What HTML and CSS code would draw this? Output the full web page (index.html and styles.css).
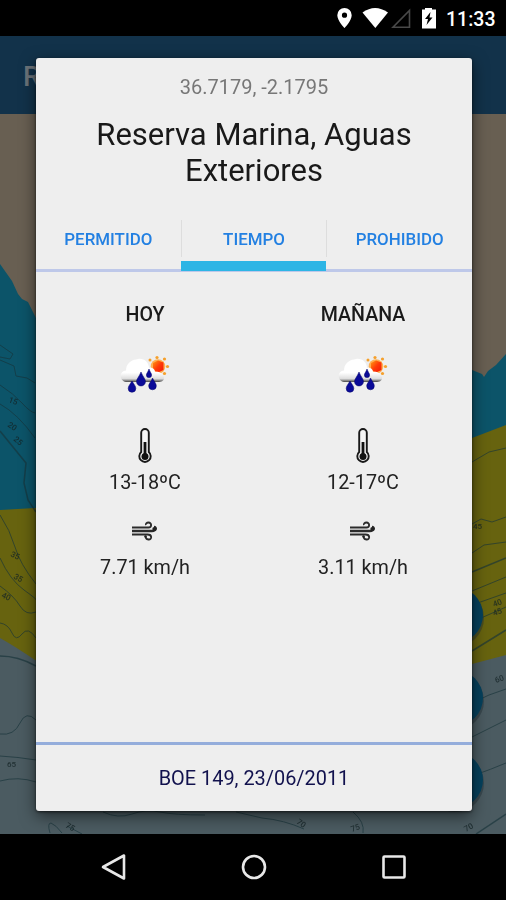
FILE: index.html
```html
<!DOCTYPE html>
<html lang="es">
<head>
<meta charset="utf-8">
<title>Reserva Marina</title>
<link rel="stylesheet" href="styles.css">
</head>
<body>
<svg width="0" height="0" class="defs" aria-hidden="true">
  <defs>
    <linearGradient id="cloud" x1="0" y1="0" x2="0" y2="1">
      <stop offset="0.6" stop-color="#fff"/><stop offset="0.86" stop-color="#ddd"/><stop offset="1" stop-color="#444"/>
    </linearGradient>
    <linearGradient id="sun" x1="0" y1="0" x2="1" y2="1">
      <stop offset="0" stop-color="#ff9a10"/><stop offset="0.5" stop-color="#ff3a08"/><stop offset="1" stop-color="#f01808"/>
    </linearGradient>
    <symbol id="rain" viewBox="0 0 50 40">
      <g fill="#f5a02c"><circle cx="30" cy="5" r="1.500"/><circle cx="37" cy="2.500" r="1.600"/><circle cx="44.500" cy="4" r="1.600"/><circle cx="47.500" cy="11.500" r="1.600"/><circle cx="44.500" cy="18.500" r="1.600"/></g>
      <circle cx="38" cy="11.500" r="7.300" fill="#ffb052"/>
      <path d="M33 8L38 5.500L43.500 7.500V15L38 17.500L33 15Z" fill="url(#sun)"/>
      <path d="M6 27C-1 26-1 16 6 15.500C6 9 11 5 16 4.500C23 2 29 7 29 13C33 12 35 15 35 17C39 16 44 19 44 23C44 26 41 27 38 27Z" fill="url(#cloud)"/>
      <g fill="#0a0a98" stroke="#05056b" stroke-width=".5">
        <path d="M12 26C14 29.500 15.800 31 15.800 33.500A3.800 3.800 0 0 1 8.200 33.500C8.200 31 10 29.500 12 26Z"/>
        <path d="M21 17C23 22 25.500 24 25.500 26.500A4.500 4.500 0 0 1 16.500 26.500C16.500 24 19 22 21 17Z"/>
        <path d="M29 14C30 17 31.600 18.500 31.600 20A2.600 2.600 0 0 1 26.400 20C26.400 18.500 28 17 29 14Z"/>
        <path d="M32.500 23C34.500 27 36.300 28.500 36.300 31A3.800 3.800 0 0 1 28.700 31C28.700 28.500 31 27 32.500 23Z"/>
      </g>
    </symbol>
    <symbol id="thermo" viewBox="0 0 16 36">
      <path d="M4.200 24V4.800a3.800 3.800 0 0 1 7.600 0V24a5.700 5.700 0 1 1-7.600 0Z" fill="#f5f5f5" stroke="#181818" stroke-width="1.900"/>
      <path d="M8 14V27" stroke="#111" stroke-width="2.800"/><circle cx="8" cy="28.500" r="3.500" fill="#111"/>
    </symbol>
    <symbol id="wind" viewBox="0 0 26 20">
      <g fill="none" stroke="#2b2b2b" stroke-width="1.800">
        <path d="M0 6.500H16.500C20 6.500 20 1.500 16.500 1.500C14.500 1.500 13.500 3 14 4"/>
        <path d="M0 10H20C24.500 10 25 6 22 6" stroke-width="2.300"/>
        <path d="M0 13.500H15.500C20.500 13.500 20 18.800 16.500 18.500C14 18 13.500 17 14 15.500"/>
      </g><circle cx="22.300" cy="8" r="2" fill="#222"/><circle cx="13.500" cy="15.500" r="1.300" fill="#222"/>
    </symbol>
  </defs>
</svg>
<div class="screen">
  <header class="status">
    <svg class="status-icons" width="104" height="24" viewBox="334 6 104 24">
      <path d="M344.500 8a7.200 7.200 0 0 0-7.200 7.200C337.300 20.500 344.500 28 344.500 28s7.200-7.500 7.200-12.800A7.200 7.200 0 0 0 344.500 8Zm0 4.600a2.600 2.600 0 1 1 0 5.200a2.600 2.600 0 0 1 0-5.200Z" fill="#fff"/>
      <path d="M362.500 12.500Q375 3.500 388 12.500L375.300 28Z" fill="#fff"/>
      <path d="M409.500 10.500V27.300H393Z" fill="none" stroke="#494949" stroke-width="1.600"/>
      <path d="M422 9.500h3V8h7v1.500h4V28.500h-14Z" fill="#fff"/>
      <path d="M430.500 12l-5.500 7h3l-1.500 6l6-7.500h-3Z" fill="#000"/>
    </svg>
    <time class="clock">11:33</time>
  </header>
  <div class="appbar">R</div>
  <svg class="map" width="506" height="720" viewBox="0 114 506 720">
    <rect y="114" width="506" height="720" fill="#685f52"/>
    <path d="M0 264L12 281L18 294L22 299L28 302L35 316L60 370H472L482 374L484 377L488 371L496 365L506 354V520H0Z" fill="#0c5469"/>
    <path d="M0 510L35 508L100 500L472 438L506 425V700H0Z" fill="#67630f"/>
    <path d="M0 638Q16 647 35 660L140 690H420L472 664L506 655V834H0Z" fill="#4b5b61"/>
    <g fill="none" stroke="#18343a" stroke-width="1" opacity=".65">
      <path d="M0 345L13 354L10 359L0 357M0 360L14 366L16 376L27 378L35 383M0 385Q14 394 22 403T35 413M0 404Q18 414 35 438"/>
      <path d="M0 431L26 463L24 483L28 500L36 512" stroke-width="1.500"/>
      <path d="M0 515Q10 530 15 547T36 584M0 558Q10 580 24 590T36 600M0 586Q14 596 20 606T36 612M0 623Q8 624 12 633T22 634T36 638"/>
      <path d="M0 656Q18 656 36 666" stroke-width="1.500"/>
      <path d="M0 734Q14 736 20 723T36 720M0 756Q18 757 36 760M0 781Q18 776 36 782"/>
      <path d="M472 462L489 452L506 448M472 524L481 519L492 522L506 517M472 553L484 545L506 542"/>
      <path d="M472 572L506 558M472 651L506 630" stroke-width="1.500"/>
      <path d="M472 591L506 577M472 605L506 593M472 622L506 607M472 703Q489 694 506 689M472 737L506 720M472 776Q492 769 506 763"/>
      <path d="M50 833Q47 823 51 823Q56 825 62 833M67 826L82 834M103 812Q118 819 132 814T160 812T205 815M236 812L262 818Q284 820 304 829M353 812Q365 822 363 833"/>
      <path d="M476 834L506 814" stroke-width="1.500"/>
    </g>
    <g class="depth">
      <text transform="translate(8 402) rotate(20)">15</text>
      <text transform="translate(7 426) rotate(35)">20</text>
      <text transform="translate(13 440) rotate(40)">25</text>
      <text transform="translate(10 556) rotate(25)">35</text>
      <text transform="translate(13 578) rotate(30)">35</text>
      <text transform="translate(1 597) rotate(25)">40</text>
      <text transform="translate(7 767)">65</text>
      <text transform="translate(473 529)">45</text>
      <text transform="translate(494 607) rotate(-20)">40</text>
      <text transform="translate(494 616) rotate(-20)">45</text>
      <text transform="translate(496 683) rotate(-20)">60</text>
      <text transform="translate(65 827) rotate(30)">75</text>
      <text transform="translate(296 823) rotate(35)">70</text>
      <text transform="translate(352 832) rotate(-20)">75</text>
      <text transform="translate(466 832) rotate(-30)">70</text>
    </g>
    <g fill="#243238" opacity=".45"><circle cx="455" cy="618" r="29"/><circle cx="455" cy="701" r="29"/><circle cx="455" cy="783" r="29"/></g>
    <g fill="#05415d"><circle cx="455" cy="615" r="28"/><circle cx="455" cy="698" r="28"/><circle cx="455" cy="780" r="28"/></g>
  </svg>
  <nav class="navbar">
    <svg width="32" height="32" viewBox="0 0 32 32"><path d="M5 16L26 4.500V27.500Z"/></svg>
    <svg width="32" height="32" viewBox="0 0 32 32"><circle cx="16" cy="16" r="11"/></svg>
    <svg width="32" height="32" viewBox="0 0 32 32"><rect x="5.500" y="5.500" width="21" height="21" rx="1"/></svg>
  </nav>
  <section class="dialog">
    <p class="coords">36.7179, -2.1795</p>
    <h1 class="title">Reserva Marina, Aguas<br>Exteriores</h1>
    <div class="tabs">
      <div class="tab"><span>PERMITIDO</span></div>
      <div class="tab active"><span>TIEMPO</span></div>
      <div class="tab"><span>PROHIBIDO</span></div>
    </div>
    <div class="forecast">
      <div class="day">
        <h2>HOY</h2>
        <svg class="rain"><use href="#rain"/></svg>
        <svg class="thermo"><use href="#thermo"/></svg>
        <p class="temp">13-18ºC</p>
        <svg class="wind"><use href="#wind"/></svg>
        <p class="speed">7.71 km/h</p>
      </div>
      <div class="day">
        <h2>MAÑANA</h2>
        <svg class="rain"><use href="#rain"/></svg>
        <svg class="thermo"><use href="#thermo"/></svg>
        <p class="temp">12-17ºC</p>
        <svg class="wind"><use href="#wind"/></svg>
        <p class="speed">3.11 km/h</p>
      </div>
    </div>
    <footer class="source">BOE 149, 23/06/2011</footer>
  </section>
</div>
</body>
</html>
```
FILE: styles.css
```css
* { box-sizing: border-box; margin: 0; }
body { font-family: Roboto, "Liberation Sans", sans-serif; background: #000; }
svg { display: block; }
.defs { position: absolute; }
.screen { position: relative; width: 506px; height: 900px; display: flex; flex-direction: column; overflow: hidden; }

.status { height: 36px; flex: none; padding-right: 10px; display: flex; align-items: center; justify-content: flex-end; gap: 8px; background: #000; }
.clock { width: 50px; color: #fff; font-size: 19.5px; font-weight: 500; line-height: 36px; white-space: nowrap; padding-top: 3px; }
.appbar { height: 78px; padding: 2px 23px 0; background: #12324a; color: #6c747a; font-size: 28px; font-weight: 500; line-height: 78px; }
.map { flex: none; }
.depth { font-size: 8px; font-weight: 500; fill: #152426; opacity: .8; }

.navbar { height: 66px; padding: 0 96px 0 98px; display: flex; justify-content: space-between; align-items: center; background: #000; }
.navbar svg { fill: none; stroke: #e8e8e8; stroke-width: 2.6; stroke-linejoin: round; }

.dialog { position: absolute; left: 36px; top: 58px; width: 436px; height: 753px; display: flex; flex-direction: column; background: #eee; border-radius: 3px; box-shadow: 0 5px 16px rgba(0,0,0,.55), 0 1px 3px rgba(0,0,0,.6); text-align: center; }
.coords { padding-top: 17px; font-size: 20px; line-height: 24px; color: #777; }
.title { margin-top: 18px; font-size: 31px; font-weight: 400; line-height: 36px; color: #191919; }

.tabs { height: 63px; margin-top: 20px; padding-top: 11px; display: flex; border-bottom: 3px solid #bec8e9; }
.tab { flex: 1; height: 37px; display: flex; align-items: center; justify-content: center; color: #2380e2; font-size: 16.9px; font-weight: 500; line-height: 36px; }
.tab + .tab { border-left: 1px solid #ddd; }
.tab.active { position: relative; }
.tab.active::after { content: ""; position: absolute; left: -1px; right: 0; bottom: -14px; height: 10px; background: #2db5e5; }

.forecast { flex: 1; display: flex; }
.day { flex: 1; display: flex; flex-direction: column; align-items: center; color: #222; font-size: 19.8px; line-height: 24px; }
.day h2 { margin-top: 31px; font-size: 19.6px; font-weight: 500; line-height: 24px; color: #1a1a1a; }
.rain { width: 50px; height: 40px; margin-top: 28px; }
.thermo { width: 16px; height: 36px; margin-top: 33px; }
.temp { margin-top: 7px; }
.wind { width: 26px; height: 20px; margin-top: 26px; }
.speed { margin-top: 15px; }
.source { height: 69px; border-top: 3px solid #94addb; color: #11114d; font-size: 19.9px; line-height: 68px; }
```
